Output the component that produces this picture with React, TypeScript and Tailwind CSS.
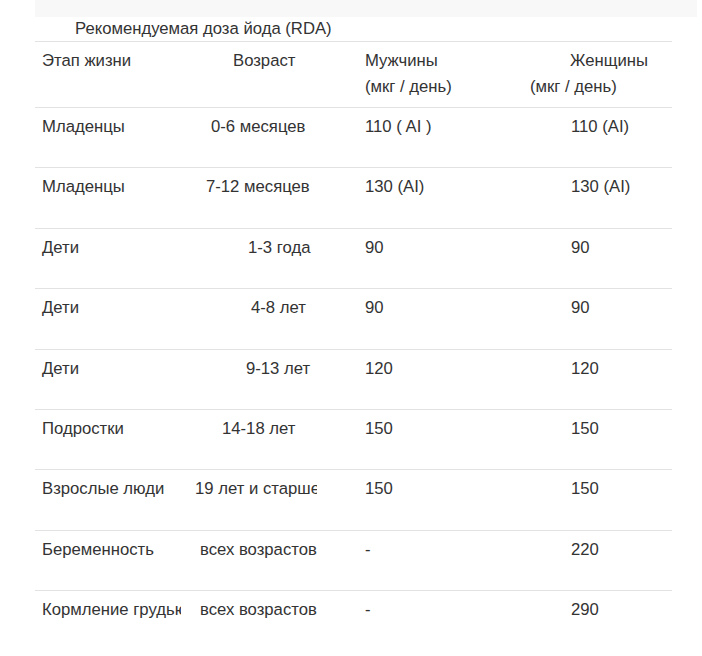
import React from "react";

type Row = {
  stage: string;
  age: string;
  agePad: string;
  men: string;
  women: string;
};

const rows: Row[] = [
  { stage: "Младенцы", age: "0-6 месяцев", agePad: "pl-[24px]", men: "110 ( AI )", women: "110 (AI)" },
  { stage: "Младенцы", age: "7-12 месяцев", agePad: "pl-[19px]", men: "130 (AI)", women: "130 (AI)" },
  { stage: "Дети", age: "1-3 года", agePad: "pl-[61px]", men: "90", women: "90" },
  { stage: "Дети", age: "4-8 лет", agePad: "pl-[64px]", men: "90", women: "90" },
  { stage: "Дети", age: "9-13 лет", agePad: "pl-[59px]", men: "120", women: "120" },
  { stage: "Подростки", age: "14-18 лет", agePad: "pl-[35px]", men: "150", women: "150" },
  { stage: "Взрослые люди", age: "19 лет и старше", agePad: "pl-[8px]", men: "150", women: "150" },
  { stage: "Беременность", age: "всех возрастов", agePad: "pl-[13px]", men: "-", women: "220" },
  { stage: "Кормление грудью", age: "всех возрастов", agePad: "pl-[13px]", men: "-", women: "290" },
];

const grid = "grid grid-cols-[152px_130px_206px_149px] border-t border-[#e2e2e2]";

const App = () => {
  return (
    <div className="w-[702px] h-[656px] bg-white text-[#333] text-[16.7px] font-['Liberation_Sans',Arial,sans-serif]">
      {/* top strip */}
      <div className="ml-[35px] mr-[5px] h-[17px] bg-[#f8f8f8]" />

      <div className="ml-[35px] w-[637px]">
        <div className="h-[24px] leading-[24px] pl-[40px]">Рекомендуемая доза йода (RDA)</div>

        {/* header */}
        <div className={`${grid} h-[66px] leading-[26px] pt-[6px]`}>
          <div className="pl-[7px]">Этап жизни</div>
          <div className="pl-[46px]">Возраст</div>
          <div className="pl-[48px]">
            <div>Мужчины</div>
            <div>(мкг / день)</div>
          </div>
          <div>
            <div className="pl-[47px]">Женщины</div>
            <div className="pl-[7px]">(мкг / день)</div>
          </div>
        </div>

        {/* body */}
        {rows.map((r, i) => (
          <div key={i} className={`${grid} h-[60.4px] leading-[26px] pt-[6px]`}>
            <div className="w-[146px] pl-[7px] overflow-hidden whitespace-nowrap">{r.stage}</div>
            <div className={`${r.agePad} overflow-hidden whitespace-nowrap`}>{r.age}</div>
            <div className="pl-[48px] whitespace-pre">{r.men}</div>
            <div className="pl-[48px]">{r.women}</div>
          </div>
        ))}
      </div>
    </div>
  );
};

export default App;
